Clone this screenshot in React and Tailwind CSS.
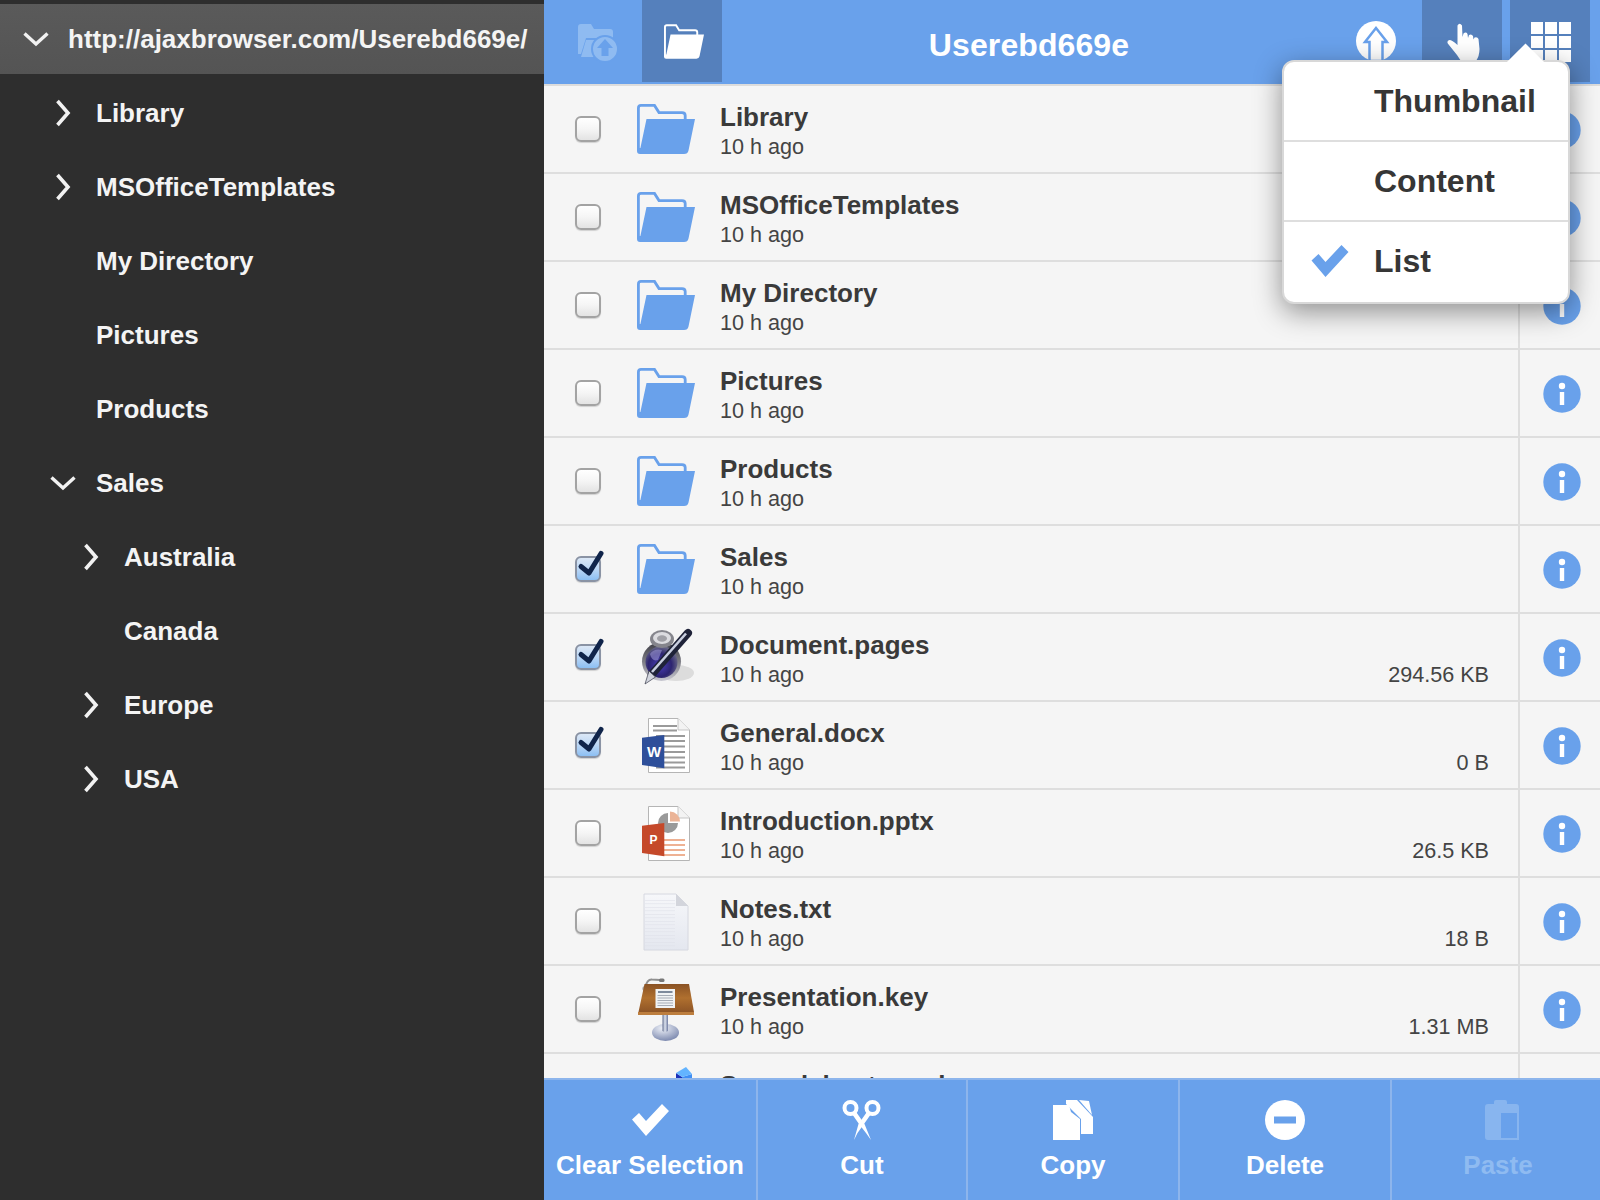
const tree = [
  { label: 'Library', depth: 0, arrow: 'right' },
  { label: 'MSOfficeTemplates', depth: 0, arrow: 'right' },
  { label: 'My Directory', depth: 0 },
  { label: 'Pictures', depth: 0 },
  { label: 'Products', depth: 0 },
  { label: 'Sales', depth: 0, arrow: 'down' },
  { label: 'Australia', depth: 1, arrow: 'right' },
  { label: 'Canada', depth: 1 },
  { label: 'Europe', depth: 1, arrow: 'right' },
  { label: 'USA', depth: 1, arrow: 'right' },
]

const files = [
  { name: 'Library', icon: 'folder' },
  { name: 'MSOfficeTemplates', icon: 'folder' },
  { name: 'My Directory', icon: 'folder' },
  { name: 'Pictures', icon: 'folder' },
  { name: 'Products', icon: 'folder' },
  { name: 'Sales', icon: 'folder', checked: true },
  { name: 'Document.pages', icon: 'pages', size: '294.56 KB', checked: true },
  { name: 'General.docx', icon: 'word', size: '0 B', checked: true },
  { name: 'Introduction.pptx', icon: 'ppt', size: '26.5 KB' },
  { name: 'Notes.txt', icon: 'txt', size: '18 B' },
  { name: 'Presentation.key', icon: 'keynote', size: '1.31 MB' },
  { name: 'Spreadsheet.numbers', icon: 'numbers' },
]

function ChevronRight() {
  return (
    <svg width="16" height="28" viewBox="0 0 16 28" fill="none">
      <path d="M2.5 2 L13 14 L2.5 26" stroke="#f2f2f2" strokeWidth="3.6" />
    </svg>
  )
}

function ChevronDown() {
  return (
    <svg width="26" height="16" viewBox="0 0 26 16" fill="none">
      <path d="M1.5 2.5 L13 13 L24.5 2.5" stroke="#f2f2f2" strokeWidth="3.4" />
    </svg>
  )
}

function Folder({ color = '#69a1eb', w = 58, h = 50 }) {
  return (
    <svg width={w} height={h} viewBox="0 0 58 50" fill="none">
      <path d="M1.4 47 V4 Q1.4 1.4 4 1.4 H17.5 L22 8.6 H45 Q48.2 8.6 48.2 11.5 V16" stroke={color} strokeWidth="2.8" />
      <path d="M9.5 15 H58 L51.5 46.5 Q50.8 50 47 50 H3 Q0 50 0 47 V44 H3.4 Z" fill={color} />
    </svg>
  )
}

function UploadFolder() {
  return (
    <svg width="41" height="39" viewBox="0 0 41 39">
      <path d="M0 3 Q0 0 3 0 H13 L16 5 H32 Q35 5 35 8 V14 H8 L3 30 H0 Z M8 16 H38 L36 28 H22 L18 33 H3 Z" fill="#8fbbf1" />
      <circle cx="27" cy="25" r="13" fill="#8fbbf1" stroke="#69a1eb" strokeWidth="2" />
      <path d="M27 15 L35 24 H30.5 V32 H23.5 V24 H19 Z" fill="#69a1eb" />
    </svg>
  )
}

function UploadCircle() {
  return (
    <svg width="40" height="40" viewBox="0 0 40 40" fill="none">
      <circle cx="20" cy="20" r="20" fill="#fff" />
      <path d="M20 7 L31 21 H26.5 V40 H13.5 V21 H9 Z" stroke="#69a1eb" strokeWidth="2.5" />
    </svg>
  )
}

function Hand() {
  return (
    <svg width="33" height="38" viewBox="0 0 33 38">
      <path d="M10.5 2.5 Q12.5 -1 15 2.5 L15.5 14 L16.5 10.5 Q19 8.5 20.5 11 L21 15 L22 12 Q24.5 10.5 26 13 L26.5 16.5 L27.5 14.5 Q30.5 13.5 31.5 16 L32.5 26 Q32.5 33 29 38 H14 L10 32 L0.8 20.5 Q-0.5 17.5 2.5 17 Q5 17 10.5 22 Z" fill="#fff" />
    </svg>
  )
}

function GridIcon() {
  return (
    <div className="grid grid-cols-3 gap-[2px] w-[40px] h-[40px] self-start">
      {[0, 1, 2, 3, 4, 5, 6, 7, 8].map(i => <div key={i} className="h-[12px] bg-white" />)}
    </div>
  )
}

function Paper({ children }) {
  return (
    <svg width="60" height="66" viewBox="0 0 60 66">
      <path d="M12.5 6.5 H42 L53.5 18 V60.5 H12.5 Z" fill="#fff" stroke="#b5b5b5" />
      <path d="M42 6.5 V18 H53.5" fill="#f3f3f3" stroke="#c5c5c5" />
      {children}
    </svg>
  )
}

function WordIcon() {
  return (
    <Paper>
      {[13, 17.5].map(y => <rect key={y} x="17" y={y} width="24" height="2" fill="#9a9a9a" />)}
      {[23, 28, 33.5, 39, 44.5, 49.5, 54.5].map(y => <rect key={y} x="20" y={y} width="29" height="2" fill="#9a9a9a" />)}
      <path d="M6 25.7 L28.3 23 V56.3 L6 53 Z" fill="#2e4f9a" />
      <text x="11" y="45" fill="#fff" fontSize="15" fontWeight="700" fontFamily="Liberation Sans">W</text>
    </Paper>
  )
}

function PptIcon() {
  return (
    <Paper>
      <path d="M32 13 A10 10 0 1 0 42 23 H32 Z" fill="#9a9a9a" />
      <path d="M34 11.5 A10 10 0 0 1 44 21.5 H34 Z" fill="#ebb497" />
      {[39, 44, 49, 54].map(y => <rect key={y} x="28" y={y} width="21" height="2" fill="#eeb193" />)}
      <path d="M6 25.7 L28.3 23 V56.3 L6 53 Z" fill="#c5492a" />
      <text x="13.5" y="44" fill="#fff" fontSize="12" fontWeight="700" fontFamily="Liberation Sans">P</text>
    </Paper>
  )
}

function TxtIcon() {
  const lines = []
  for (let y = 12; y < 60; y += 3.5) lines.push(y)
  return (
    <svg width="60" height="66" viewBox="0 0 60 66">
      <defs>
        <linearGradient id="txtFill" x1="0" y1="0" x2="0" y2="1">
          <stop offset="0" stopColor="#f6f7fa" />
          <stop offset="1" stopColor="#e4e7ef" />
        </linearGradient>
      </defs>
      <path d="M8 6 H40 L52 18 V62 H8 Z" fill="url(#txtFill)" stroke="#d6d8e0" />
      {lines.map(y => <rect key={y} x="9" y={y} width="30" height="0.6" fill="#dfe2ea" />)}
      <path d="M40 6 V18 H52 Z" fill="#d3d5dc" />
    </svg>
  )
}

function PagesIcon() {
  return (
    <svg width="60" height="66" viewBox="0 0 60 66">
      <defs>
        <radialGradient id="inkBody" cx="0.45" cy="0.6" r="0.6">
          <stop offset="0" stopColor="#4b3fbb" />
          <stop offset="0.6" stopColor="#2c2470" />
          <stop offset="1" stopColor="#6c6c88" />
        </radialGradient>
        <linearGradient id="rim" x1="0" y1="0" x2="0" y2="1">
          <stop offset="0" stopColor="#3c3c44" />
          <stop offset="0.6" stopColor="#8a8a92" />
          <stop offset="1" stopColor="#c9c9d2" />
        </linearGradient>
      </defs>
      <ellipse cx="40" cy="49" rx="18" ry="8" fill="#000" opacity="0.1" />
      <circle cx="25.5" cy="37.5" r="19.5" fill="url(#rim)" />
      <circle cx="25.5" cy="38" r="16" fill="url(#inkBody)" />
      <ellipse cx="26" cy="15" rx="12" ry="9" fill="#85858c" />
      <ellipse cx="26" cy="14" rx="9" ry="6" fill="#dcdce0" />
      <ellipse cx="26" cy="14.5" rx="5" ry="3.2" fill="#a0a0a6" />
      <path d="M14 30 Q18 24 26 26 L22 36 Q16 38 14 30 Z" fill="#9a94d4" opacity="0.6" />
      <path d="M52 9 L16 50" stroke="#1e2238" strokeWidth="8" strokeLinecap="round" />
      <path d="M50 9.5 L16 48" stroke="#c9cfe0" strokeWidth="2.6" />
      <path d="M13 47 L19.5 53 L9 60 Z" fill="#d2d5de" stroke="#3a3c4c" strokeWidth="0.7" />
    </svg>
  )
}

function KeynoteIcon() {
  return (
    <svg width="60" height="66" viewBox="0 0 60 66">
      <defs>
        <linearGradient id="wood" x1="0" y1="0" x2="0" y2="1">
          <stop offset="0" stopColor="#8a5224" />
          <stop offset="0.5" stopColor="#b0702f" />
          <stop offset="1" stopColor="#8e5526" />
        </linearGradient>
        <linearGradient id="pole" x1="0" y1="0" x2="1" y2="0">
          <stop offset="0" stopColor="#5f6b8c" />
          <stop offset="0.45" stopColor="#dfe5f0" />
          <stop offset="1" stopColor="#6f7ba0" />
        </linearGradient>
        <radialGradient id="base" cx="0.4" cy="0.25" r="0.85">
          <stop offset="0" stopColor="#eef1f8" />
          <stop offset="1" stopColor="#6f7da6" />
        </radialGradient>
      </defs>
      <path d="M9 12 Q11 3 16 3.5 Q20 3.5 24 4" fill="none" stroke="#8f8f8f" strokeWidth="1.8" />
      <circle cx="9" cy="12.5" r="2.6" fill="#a8a8a8" />
      <rect x="23" y="2.5" width="5.5" height="3.4" rx="1.5" fill="#777" />
      <path d="M8.5 8 H53 L58 36 H2.5 Z" fill="url(#wood)" />
      <rect x="2" y="36" width="56" height="3" fill="#bd7e3e" />
      <rect x="19.5" y="13" width="19.5" height="19" fill="#f0f2f4" />
      <rect x="22" y="15" width="14.5" height="2" fill="#7d8a9c" />
      {[19, 21.5, 24, 26.5, 29].map(y => <rect key={y} x="21.5" y={y} width="15.5" height="1" fill="#a6acb6" />)}
      <ellipse cx="29.5" cy="56.5" rx="13.5" ry="8.5" fill="url(#base)" />
      <path d="M26.5 39 H32 V55 Q29 57 26.5 55 Z" fill="url(#pole)" />
    </svg>
  )
}

function NumbersIcon() {
  return (
    <svg width="60" height="66" viewBox="0 0 60 66">
      <path d="M40 9 L46 13 V24 L40 24 Z" fill="#1b30b8" />
      <path d="M46 13 L56 10 V24 L46 24 Z" fill="#3f8ff5" />
      <path d="M40 9 L50 3 L56 10 L46 13 Z" fill="#63b4ff" />
    </svg>
  )
}

function FileIcon({ type }) {
  if (type === 'folder') return <Folder />
  if (type === 'pages') return <PagesIcon />
  if (type === 'word') return <WordIcon />
  if (type === 'ppt') return <PptIcon />
  if (type === 'txt') return <TxtIcon />
  if (type === 'keynote') return <KeynoteIcon />
  return <NumbersIcon />
}

function Checkbox({ checked }) {
  return (
    <div className={`relative w-[26px] h-[26px] rounded-[6px] border-2 shadow-[0_1px_1px_rgba(0,0,0,0.15)] ${checked
      ? 'border-[#8a93a4] bg-linear-to-b from-[#dbe7f6] via-[#bcd7f5] to-[#8cbff3]'
      : 'border-[#a3a3a3] bg-linear-to-b from-[#ffffff] via-[#f5f5f5] to-[#e3e3e3]'}`}>
      {checked && (
        <svg className="absolute left-[0px] top-[-10px]" width="28" height="32" viewBox="0 0 28 32" fill="none">
          <path d="M4 18.5 L12 25 L24 5.5" stroke="#10244a" strokeWidth="5" strokeLinecap="round" strokeLinejoin="round" />
        </svg>
      )}
    </div>
  )
}

function InfoIcon() {
  return (
    <svg width="38" height="38" viewBox="0 0 38 38">
      <circle cx="19" cy="19" r="18.7" fill="#69a1eb" />
      <circle cx="19" cy="11" r="3.2" fill="#fff" />
      <rect x="16.8" y="17" width="4.4" height="13" fill="#fff" />
    </svg>
  )
}

function FileRow({ file }) {
  return (
    <div className="flex h-[88px] shrink-0 border-b-2 border-[#dedede]">
      <div className="w-[92px] pl-[31px] flex items-center shrink-0">
        <Checkbox checked={file.checked} />
      </div>
      <div className="w-[60px] flex items-center justify-center shrink-0">
        <FileIcon type={file.icon} />
      </div>
      <div className="flex-1 flex flex-col justify-center pl-[24px] pr-[29px] pt-[5px]">
        <div className="text-[26px] leading-[30px] font-bold text-[#3a3a3a]">{file.name}</div>
        <div className="mt-[1px] flex justify-between text-[21.6px] leading-[28px] text-[#444]">
          <span>10 h ago</span>
          <span>{file.size}</span>
        </div>
      </div>
      <div className="w-[82px] shrink-0 border-l-2 border-[#dedede] flex items-center justify-center pl-[4px] pt-[2px]">
        <InfoIcon />
      </div>
    </div>
  )
}

function Sidebar() {
  return (
    <aside className="w-[544px] shrink-0 h-full bg-[#2e2e2e] pt-[4px] text-[#f4f4f4]">
      <div className="h-[70px] mb-[2px] flex items-center bg-linear-to-b from-[#5a5a5a] to-[#545454]">
        <div className="w-[68px] flex justify-center pl-[4px]"><ChevronDown /></div>
        <span className="text-[26px] font-bold whitespace-nowrap">http://ajaxbrowser.com/Userebd669e/</span>
      </div>
      {tree.map(item => (
        <div key={item.label} className={`h-[74px] flex items-center ${item.depth ? 'pl-[28px]' : ''}`}>
          <div className="w-[96px] flex justify-center pl-[30px] shrink-0">
            {item.arrow === 'right' && <ChevronRight />}
            {item.arrow === 'down' && <ChevronDown />}
          </div>
          <span className="text-[26px] font-bold">{item.label}</span>
        </div>
      ))}
    </aside>
  )
}

function Header() {
  return (
    <header className="h-[86px] shrink-0 flex items-start bg-[#69a1eb] border-b-2 border-[#dcdcdc] pl-[14px] pr-[10px]">
      <div className="w-[80px] h-[82px] flex items-center justify-center pt-[4px]"><UploadFolder /></div>
      <div className="ml-[4px] w-[80px] h-[82px] flex items-center justify-center bg-[#5580bc] pl-[4px]">
        <Folder color="#fff" w={40} h={35} />
      </div>
      <div className="flex-1 h-[82px] pt-[8px] flex items-center justify-center text-[32px] tracking-[0.1px] font-bold text-white">Userebd669e</div>
      <div className="w-[80px] h-[82px] flex items-center justify-center"><UploadCircle /></div>
      <div className="ml-[6px] w-[80px] h-[82px] bg-[#5580bc] flex justify-center pt-[23px] pl-[3px]"><Hand /></div>
      <div className="ml-[8px] w-[80px] h-[82px] bg-[#5580bc] flex justify-center pt-[22px] pl-[2px]"><GridIcon /></div>
    </header>
  )
}

function CheckIcon({ color = '#fff', w = 37, h = 32 }) {
  return (
    <svg width={w} height={h} viewBox="0 0 37 32">
      <path d="M0 15.5 L7 9 L14 17 L30 0 L37 7 L14 32 Z" fill={color} />
    </svg>
  )
}

function ScissorsIcon() {
  return (
    <svg width="40" height="40" viewBox="0 0 40 40" fill="none">
      <circle cx="8.5" cy="8" r="6" stroke="#fff" strokeWidth="4" />
      <circle cx="30.5" cy="8" r="6" stroke="#fff" strokeWidth="4" />
      <path d="M10 14 L14.5 12.5 L22.5 24 L29 40 L24 33 L17 24 Z" fill="#fff" />
      <path d="M29 14 L24.5 12.5 L16.5 24 L12 40 L15.5 33 L22 24 Z" fill="#fff" />
    </svg>
  )
}

function CopyIcon() {
  return (
    <svg width="40" height="40" viewBox="0 0 40 40">
      <path d="M13 0 H24 L40 17 V34 H28 V19 L13 4 Z" fill="#fff" />
      <path d="M26 0 L39 15 L36 1 Z" fill="#fff" />
      <path d="M0 5 H16 L18 12 L27 19 V40 H0 Z" fill="#fff" />
    </svg>
  )
}

function DeleteIcon() {
  return (
    <svg width="40" height="40" viewBox="0 0 40 40">
      <circle cx="20" cy="20" r="20" fill="#fff" />
      <rect x="9" y="16.5" width="22" height="7" fill="#69a1eb" />
    </svg>
  )
}

function PasteIcon() {
  return (
    <svg width="34" height="40" viewBox="0 0 34 40" fill="none">
      <path d="M0 7 Q0 4 3 4 H9 V2 Q9 0 11 0 H20 Q22 0 22 2 V4 H31 Q34 4 34 7 V11 H14 V40 H3 Q0 40 0 37 Z" fill="#88b5ef" />
      <path d="M15 12 H33 V39 H15 Z" stroke="#88b5ef" strokeWidth="2" />
    </svg>
  )
}

function ToolButton({ label, icon, width, faded, last }) {
  return (
    <div className={`${width} h-full flex flex-col items-center pt-[20px] border-r-2 ${last ? 'border-transparent pl-[6px]' : faded ? 'border-[#72a6ec]' : 'border-[#8db5ec]'}`}>
      <div className={`h-[40px] flex items-center justify-center ${last ? 'pl-[8px]' : ''}`}>{icon}</div>
      <div className={`mt-[10px] text-[26px] leading-[30px] font-bold whitespace-nowrap ${faded ? 'text-[#8fbbf1]' : 'text-white'}`}>{label}</div>
    </div>
  )
}

function Toolbar() {
  return (
    <footer className="relative h-[122px] shrink-0 flex bg-[#69a1eb] border-t-2 border-[#8db5ec]">
      <ToolButton width="w-[214px]" label="Clear Selection" icon={<CheckIcon />} />
      <ToolButton width="w-[210px]" label="Cut" icon={<ScissorsIcon />} />
      <ToolButton width="w-[212px]" label="Copy" icon={<CopyIcon />} />
      <ToolButton width="w-[212px]" label="Delete" icon={<DeleteIcon />} />
      <ToolButton width="flex-1" label="Paste" icon={<PasteIcon />} faded last />
    </footer>
  )
}

function Popover() {
  const items = ['Thumbnail', 'Content', 'List']
  return (
    <div className="absolute left-[1282px] top-[60px] w-[288px] bg-white rounded-[12px] border-2 border-[#d8d8d8] shadow-[0_8px_28px_rgba(0,0,0,0.42)]">
      <div className="absolute left-[228px] top-[-13px] w-[27px] h-[27px] rotate-45 bg-white" />
      {items.map((item, i) => (
        <div key={item} className={`relative flex items-center pl-[90px] text-[32px] font-bold text-[#363636] ${i < 2 ? 'h-[80px] border-b-2 border-[#dedede]' : 'h-[80px] pb-[2px]'}`}>
          {item === 'List' && (
            <div className="absolute left-[27px] top-[23px]"><CheckIcon color="#69a1eb" w={38} h={32} /></div>
          )}
          {item}
        </div>
      ))}
    </div>
  )
}

export default function App() {
  return (
    <div className="relative w-[1600px] h-[1200px] overflow-hidden flex font-['Liberation_Sans',sans-serif]">
      <Sidebar />
      <main className="flex-1 flex flex-col h-full min-w-0 bg-[#f5f5f5]">
        <Header />
        <div className="flex-1 min-h-0 overflow-hidden flex flex-col">
          {files.map(f => <FileRow key={f.name} file={f} />)}
        </div>
        <Toolbar />
      </main>
      <Popover />
    </div>
  )
}
